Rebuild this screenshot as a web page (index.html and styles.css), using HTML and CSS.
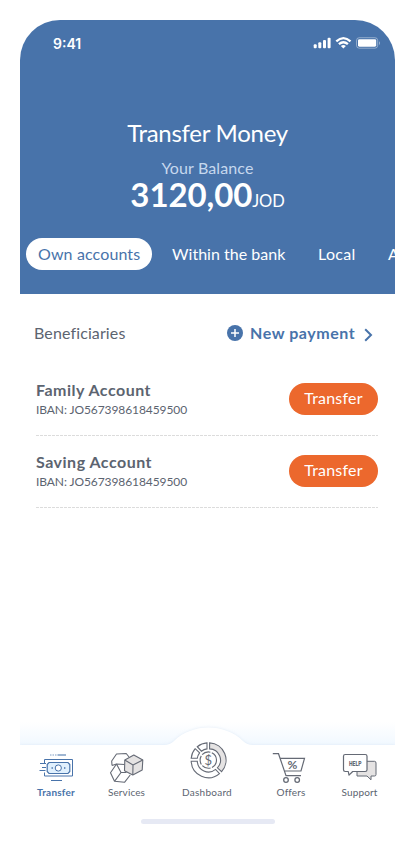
FILE: index.html
```html
<!DOCTYPE html>
<html lang="en">
<head>
<meta charset="utf-8">
<title>Transfer Money</title>
<link rel="stylesheet" href="styles.css">
</head>
<body>
<main class="phone">
  <header class="header">
    <div class="status">
      <span class="clock">9:41</span>
      <svg class="status-icons" width="68" height="14" viewBox="313 36 68 14" fill="#fff">
        <rect x="313.7" y="44.3" width="3" height="4" rx="1"/>
        <rect x="318.3" y="42.3" width="3" height="6" rx="1"/>
        <rect x="323" y="40" width="3" height="8.3" rx="1"/>
        <rect x="327.6" y="37.7" width="3" height="10.6" rx="1"/>
        <g fill="none" stroke="#fff" stroke-width="2.3"><path d="M336.3 41.4Q343.4 34.9 350.5 41.4"/><path d="M338.9 44.2Q343.4 40.2 347.9 44.2"/></g>
        <path d="M340.9 46Q343.4 44.2 345.9 46L343.4 48.5Z"/>
        <rect x="356.5" y="37.7" width="21.2" height="10.5" rx="2.8" fill="none" stroke="#fff" opacity=".4"/>
        <rect x="358" y="39.2" width="18.2" height="7.5" rx="1.4"/>
        <path d="M379 41.2v3.7q1-.5 1-1.85t-1-1.85" opacity=".45"/>
      </svg>
    </div>
    <h1 class="title">Transfer Money</h1>
    <p class="balance-label">Your Balance</p>
    <p class="balance"><span class="amount">3120,00</span><span class="currency">JOD</span></p>
    <nav class="tabs">
      <span class="tab tab-active">Own accounts</span>
      <span class="tab tab-bank">Within the bank</span>
      <span class="tab tab-local">Local</span>
      <span class="tab tab-cut">A</span>
    </nav>
  </header>

  <section class="content">
    <div class="section-head">
      <h2 class="section-title">Beneficiaries</h2>
      <a class="new-payment">
        <svg width="16" height="16" viewBox="0 0 16 16"><circle cx="8" cy="8" r="8" fill="#4873aa"/><path d="M8 4v8M4 8h8" stroke="#fff" stroke-width="1.5"/></svg>
        <span class="new-label">New payment</span>
        <svg class="chevron" width="9" height="14" viewBox="0 0 9 14"><path d="M1.2 1.3 7 7l-5.8 5.7" fill="none" stroke="#4873aa" stroke-width="2"/></svg>
      </a>
    </div>
    <ul class="accounts">
      <li class="account">
        <div><h3 class="name">Family Account</h3><p class="iban">IBAN: JO567398618459500</p></div>
        <button class="transfer">Transfer</button>
      </li>
      <li class="account">
        <div><h3 class="name">Saving Account</h3><p class="iban">IBAN: JO567398618459500</p></div>
        <button class="transfer">Transfer</button>
      </li>
    </ul>
  </section>

  <footer class="dock">
    <svg class="dock-shape" width="375" height="112" viewBox="20 720 375 112">
      <defs>
        <linearGradient id="haze" x2="0" y2="1"><stop offset="0" stop-color="#f1f8ff" stop-opacity="0"/><stop offset="1" stop-color="#f1f8ff"/></linearGradient>
        <filter id="soft" x="-10%" y="-30%" width="120%" height="160%"><feGaussianBlur stdDeviation="1.5"/></filter>
      </defs>
      <rect x="20" y="722" width="375" height="23" fill="url(#haze)"/>
      <path d="M20 745H164Q170 745 174 741C192 723 225 723 243 741Q247 745 253 745H395V832H20Z" fill="#c7daee" opacity=".5" filter="url(#soft)"/>
      <path d="M20 745H164Q170 745 174 741C192 723 225 723 243 741Q247 745 253 745H395V832H20Z" fill="#fff"/>
    </svg>
    <nav class="dock-items">
      <a class="item item-transfer">
        <svg class="icon" width="40" height="34" viewBox="36 750 40 34" fill="none" stroke="#4873aa">
          <path d="M50 755h7" stroke-dasharray="1.5 1" opacity=".7"/><path d="M57.5 755h8.5" stroke-width="1.4" opacity=".75"/>
          <path d="M44.5 763v-3.5h28V776h-28v-3.5M40 763.5h6M42 767.5h4M39.5 770.5h6"/>
          <path d="M49 762.5h19l1.8 2v7l-1.8 2H49l-1.8-2v-7z" fill="#e0f0fd" stroke-width="1.2"/>
          <circle cx="58.3" cy="768" r="3.1" fill="#fff"/><path d="M51.5 768h1.4M64 768h1.4" stroke-width="1.4"/><path d="M51 780.5h11"/>
        </svg>
        <span class="caption caption-active">Transfer</span>
      </a>
      <a class="item item-services">
        <svg class="icon" width="40" height="34" viewBox="106.5 750 40 34" fill="none" stroke="#656a75" stroke-width="1.1" stroke-linejoin="round">
          <path d="M111.5 765.5 111.2 761 116 754 125.7 753.5 128.5 757M111.5 765.5 116 764 124 764.5"/>
          <path d="M116 764 110 772.7 114 781.3 124 782.3 129.7 775M116 764 120.5 772.5 114 781.3M120.5 772.5H126"/>
          <path d="M133.3 755 142.3 760 141.7 770 132.3 775 124 770.7 124.3 760Z" fill="#e5e3e3"/>
          <path d="M124.3 760 132.5 765 142.3 760M132.5 765 132.3 775"/>
        </svg>
        <span class="caption">Services</span>
      </a>
      <a class="item item-dashboard">
        <svg class="icon icon-large" width="40" height="40" viewBox="187 740 40 40" fill="none" stroke="#656a75" stroke-width="1.1">
          <path d="M209.6 742.9A17.2 17.2 0 0 1 221.6 771.6L217.4 767.8A11.2 11.2 0 0 0 209.6 748.9Z" fill="#e5e3e3"/>
          <path d="M219.5 773.6A17.2 17.2 0 0 1 191.2 761.2H197.3A11.2 11.2 0 0 0 215.6 769.4Z"/>
          <path d="M191.2 758.2A17 17 0 0 1 195.2 748.7L199.6 752.8A11 11 0 0 0 197.3 758.2ZM197.3 746.7A17 17 0 0 1 207 742.9V748.9A11 11 0 0 0 201.4 751.2Z"/>
          <circle cx="208.3" cy="760.1" r="8.2" stroke-dasharray="9 1.5"/>
          <text class="glyph" x="208.3" y="764.6" font-size="13">$</text>
        </svg>
        <span class="caption caption-dashboard">Dashboard</span>
      </a>
      <a class="item item-offers">
        <svg class="icon" width="40" height="34" viewBox="271 750 40 34" fill="none" stroke="#656a75">
          <path d="M272.8 753.7H278.5L286 775.7H301M280 758.3H304.5L301 771H284.2" stroke-width="1.2"/>
          <circle cx="286" cy="780" r="2.3" stroke-width="1.3"/><circle cx="297.2" cy="780" r="2.3" stroke-width="1.3"/>
          <text class="glyph glyph-strong" x="292.4" y="768.8" font-size="12">%</text>
        </svg>
        <span class="caption">Offers</span>
      </a>
      <a class="item item-support">
        <svg class="icon" width="40" height="34" viewBox="339.5 750 40 34" fill="none" stroke="#656a75" stroke-linejoin="round">
          <path d="M366 761.3H374Q375.5 761.3 375.5 763V774.5Q375.5 776 374 776H370.5V779.8L366.5 776H356.5V771.5Z" fill="#e5e3e3"/>
          <path d="M344.7 754.5H364.8Q366.5 754.5 366.5 756.2V769.8Q366.5 771.5 364.8 771.5H352.2L348.5 775.2 347.8 771.5H344.7Q343 771.5 343 769.8V756.2Q343 754.5 344.7 754.5Z" fill="#fff" stroke-width="1.2"/>
          <text class="help" x="354.8" y="765.8" textLength="12.5" lengthAdjust="spacingAndGlyphs">HELP</text>
        </svg>
        <span class="caption">Support</span>
      </a>
    </nav>
    <div class="home-bar"></div>
  </footer>
</main>
</body>
</html>
```

FILE: styles.css
```css
* { box-sizing: border-box; margin: 0; padding: 0; }
body { background: #fff; font-family: Lato, sans-serif; color: #5c6470; }
.phone { width: 375px; height: 812px; margin: 20px; display: flex; flex-direction: column; overflow: hidden; border-radius: 40px 40px 0 0; background: #fff; }
.header { height: 274px; flex: none; background: #4873aa; color: #fff; text-align: center; }
.status { height: 48px; display: flex; justify-content: space-between; align-items: center; padding: 0 14px 0 33px; }
.clock { font: 600 14px/20px Inter, sans-serif; }
.status-icons { margin-bottom: 2px; }
.title { margin-top: 50px; font-size: 24px; line-height: 30px; font-weight: 400; letter-spacing: -.27px; }
.balance-label { margin-top: 10px; font-size: 16px; line-height: 20px; color: #c6d8ee; letter-spacing: .12px; }
.balance { height: 34px; line-height: 32px; white-space: nowrap; }
.amount { font-size: 33px; font-weight: 700; letter-spacing: -.1px; }
.currency { font-size: 16.5px; letter-spacing: -.1px; }
.tabs { display: flex; margin: 26px 0 0 6px; height: 32px; font-size: 16px; line-height: 32px; white-space: nowrap; letter-spacing: .12px; }
.tab { flex: none; text-align: left; }
.tab-active { width: 126px; padding-left: 12px; border-radius: 16px; background: #fff; color: #4873aa; margin-right: 20px; }
.tab-bank { width: 146px; letter-spacing: .02px; }
.tab-local { width: 70px; letter-spacing: .3px; }
.section-head { display: flex; justify-content: space-between; align-items: center; height: 24px; margin: 27px 22px 0 14px; }
.section-title { font-size: 16px; line-height: 22px; font-weight: 400; letter-spacing: .12px; margin-bottom: 1px; }
.new-payment { display: flex; align-items: center; color: #4873aa; font-size: 16px; line-height: 22px; font-weight: 700; }
.new-label { width: 105px; margin: 0 9px 1px 7px; white-space: nowrap; letter-spacing: .56px; }
.chevron { margin-top: 3px; }
.accounts { list-style: none; margin: 19px 17px 0 16px; }
.account { height: 72px; padding-bottom: 2px; display: flex; justify-content: space-between; align-items: center; background: repeating-linear-gradient(90deg, #dcdcdc 0 3px, transparent 3px 4px) left bottom / 100% 1px no-repeat; }
.name { font-size: 16px; line-height: 20px; font-weight: 700; letter-spacing: .5px; }
.iban { font-size: 12px; line-height: 19px; white-space: nowrap; letter-spacing: -.09px; }
.transfer { width: 89px; height: 32px; padding-bottom: 2px; border: 0; border-radius: 16px; background: #ec682d; color: #fff; font: 16px/30px Lato, sans-serif; letter-spacing: .2px; }
.dock { margin-top: auto; height: 112px; display: grid; }
.dock-shape { grid-area: 1 / 1; }
.dock-items { grid-area: 1 / 1; display: flex; height: 79px; z-index: 1; }
.item { display: flex; flex-direction: column; align-items: center; justify-content: flex-end; }
.item-transfer { width: 72px; color: #4873aa; font-weight: 700; }
.item-services { width: 69px; }
.item-dashboard { width: 92px; }
.item-offers { width: 76px; }
.item-support { width: 61px; }
.icon { flex: none; margin-bottom: 1px; }
.icon-large { margin-bottom: 5px; }
.caption { font-size: 10px; line-height: 14px; letter-spacing: .12px; }
.caption-dashboard { letter-spacing: .25px; }
.caption-active { letter-spacing: .2px; }
.glyph { font-family: Lato, sans-serif; fill: #656a75; stroke: none; text-anchor: middle; }
.glyph-strong { font-weight: 700; }
.help { font: 900 7px Roboto, sans-serif; fill: #656a75; stroke: none; text-anchor: middle; }
.home-bar { grid-area: 1 / 1; align-self: end; justify-self: center; width: 134px; height: 5px; margin-bottom: 8px; border-radius: 3px; background: #e6e9f4; z-index: 1; }
```
